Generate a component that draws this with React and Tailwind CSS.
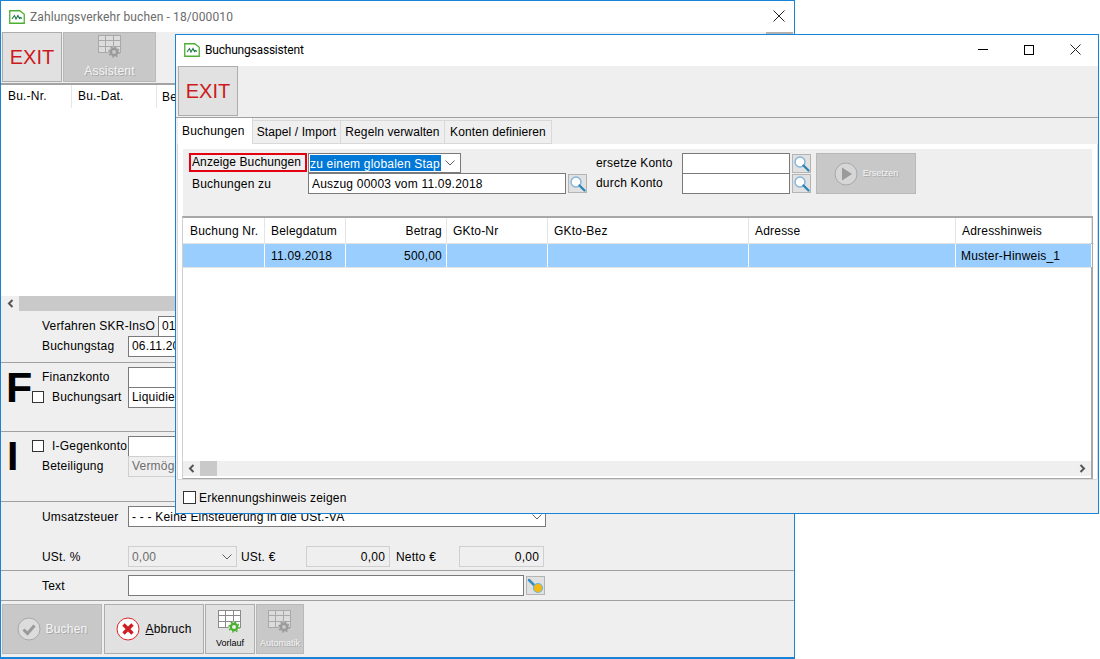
import React from 'react'

const font = "font-['Liberation_Sans',Arial,sans-serif] tracking-[0.2px]"
const disabledText = 'text-[#f4f4f4] [text-shadow:1px_1px_0_#a8a8a8]'

function AppIcon() {
  return (
    <svg width="16" height="16" viewBox="0 0 16 16" className="shrink-0">
      <path d="M.75 1.75h10l4.5 3.5v9h-14.5z" fill="#fff" stroke="#4caf32" strokeWidth="1.3" />
      <path d="M3 10l2.5-3.5L7 10l2-3.5 1.5 3 1-1 1.5 1" fill="none" stroke="#1f7a4a" strokeWidth="1.1" />
    </svg>
  )
}

function GridGear({ muted }) {
  const line = muted ? '#a9a9a9' : '#8a8a8a'
  const fill = muted ? '#dcdcdc' : '#fff'
  const gear = muted ? '#9a9a9a' : '#4caf32'
  return (
    <svg width="26" height="24" viewBox="0 0 26 24">
      <rect x="1.5" y="1.5" width="22" height="17" fill={fill} stroke={line} />
      <path d="M1.5 6.5h22M1.5 12.5h22M8.5 1.5v17M16.5 1.5v17" stroke={line} fill="none" />
      <circle cx="17" cy="18" r="5.5" fill={muted ? '#c8c8c8' : '#efefef'} />
      <circle cx="17" cy="18" r="3.2" fill="none" stroke={gear} strokeWidth="2.4" />
      <circle cx="17" cy="18" r="5" fill="none" stroke={gear} strokeWidth="1.4" strokeDasharray="1.8 2.1" />
    </svg>
  )
}

function Magnifier() {
  return (
    <svg width="17" height="17" viewBox="0 0 17 17">
      <circle cx="7" cy="7" r="5" fill="#fff" stroke="#7fb5d8" strokeWidth="1.4" />
      <path d="M10.5 10.5l5 5" stroke="#2f86b8" strokeWidth="2.4" strokeLinecap="round" />
    </svg>
  )
}

function SearchButton() {
  return (
    <button className="w-[19px] h-[19px] shrink-0 flex items-center justify-center bg-[#e1e1e1] border border-[#b4b4b4]">
      <Magnifier />
    </button>
  )
}

function ExitButton() {
  return (
    <button className="w-[60px] h-[50px] shrink-0 flex items-center justify-center bg-[#e1e1e1] border border-[#adadad] text-[#cc1a1e] text-[20px] tracking-normal">
      EXIT
    </button>
  )
}

function Field({ w, children, disabled, right, className = '' }) {
  return (
    <div
      className={`h-[21px] shrink-0 flex items-center px-[3px] whitespace-nowrap overflow-hidden text-[12px] border ${
        disabled ? 'bg-[#efefef] border-[#cfcfcf] text-[#6d6d6d]' : 'bg-white border-[#7a7a7a] text-black'
      } ${right ? 'justify-end' : ''} ${className}`}
      style={{ width: w }}
    >
      {children}
    </div>
  )
}

function Chevron() {
  return (
    <svg width="10" height="6" viewBox="0 0 10 6" className="shrink-0">
      <path d="M.5.5L5 5 9.5.5" fill="none" stroke="#606060" />
    </svg>
  )
}

function Checkbox({ large }) {
  return <span className={`shrink-0 bg-white border border-[#333] ${large ? 'w-[13px] h-[13px]' : 'w-[12px] h-[12px]'}`} />
}

function Label({ w, children }) {
  return (
    <span className="shrink-0 text-[12px] text-black whitespace-nowrap" style={{ width: w }}>
      {children}
    </span>
  )
}

function BackWindow() {
  return (
    <div className="absolute left-0 top-0 w-[795px] h-[659px] flex flex-col bg-[#efefef] border border-[#1883d7] border-b-2">
      <div className="h-[31px] shrink-0 bg-white flex items-center pl-[8px] gap-[5px]">
        <AppIcon />
        <span className="text-[12px] text-[#6b6b6b] tracking-[0.12px] font-['Roboto',sans-serif] flex-1">Zahlungsverkehr buchen - 18/000010</span>
        <svg width="12" height="12" viewBox="0 0 12 12" className="mr-[9px] mb-[2px]">
          <path d="M.5.5l11 11M11.5.5l-11 11" stroke="#222" />
        </svg>
      </div>

      <div className="relative h-[51px] shrink-0 flex pl-[1px] gap-[1px] border-b-[2px] border-[#a3a3a3] box-content">
        <ExitButton />
        <div className="w-[93px] h-[50px] flex flex-col items-center bg-[#c8c8c8] border border-[#b9b9b9] pt-[1px]">
          <GridGear muted />
          <span className={`text-[12px] leading-[14px] mt-[6px] ${disabledText}`}>Assistent</span>
        </div>
        <span className="absolute right-[1px] top-0 w-[27px] h-[2px] bg-[#b0b0b0]" />
      </div>

      <div className="h-[226px] shrink-0 bg-white flex flex-col">
        <div className="h-[23px] flex text-[12px] text-black items-center">
          <span className="w-[71px] pl-[7px] h-full border-r border-[#e6e6e6] leading-[23px]">Bu.-Nr.</span>
          <span className="w-[85px] pl-[6px] h-full border-r border-[#e6e6e6] leading-[23px]">Bu.-Dat.</span>
          <span className="pl-[5px]">Be</span>
        </div>
        <div className="flex-1" />
        <div className="h-[15px] bg-[#c9c9c9] flex">
          <div className="w-[18px] bg-[#efefef] flex items-center justify-center">
            <svg width="7" height="9" viewBox="0 0 7 9"><path d="M5.5 1L2 4.5 5.5 8" fill="none" stroke="#555" strokeWidth="2" /></svg>
          </div>
        </div>
      </div>

      <section className="h-[52px] shrink-0 border-b border-[#a0a0a0] flex flex-col pt-[5px]">
        <div className="h-[20px] flex items-center">
          <span className="w-[41px]" />
          <Label w={116}>Verfahren SKR-InsO</Label>
          <Field w={60}>01</Field>
        </div>
        <div className="h-[20px] flex items-center">
          <span className="w-[41px]" />
          <Label w={86}>Buchungstag</Label>
          <Field w={120}>06.11.2018</Field>
        </div>
      </section>

      <section className="h-[69px] shrink-0 border-b border-[#a0a0a0] flex pt-[4px]">
        <span className="w-[31px] shrink-0 pl-[5px] text-[43px] leading-[40px] font-bold text-black tracking-normal">F</span>
        <div className="flex flex-col">
          <div className="h-[20px] flex items-center">
            <span className="w-[10px]" />
            <Label w={86}>Finanzkonto</Label>
            <Field w={120} />
          </div>
          <div className="h-[20px] flex items-center">
            <Checkbox />
            <span className="w-[8px]" />
            <Label w={76}>Buchungsart</Label>
            <Field w={120}>Liquidierung</Field>
          </div>
        </div>
      </section>

      <section className="h-[70px] shrink-0 border-b border-[#a0a0a0] flex pt-[4px]">
        <span className="w-[31px] shrink-0 pl-[6px] text-[41px] leading-[40px] font-bold text-black tracking-normal">I</span>
        <div className="flex flex-col">
          <div className="h-[20px] flex items-center">
            <Checkbox />
            <span className="w-[8px]" />
            <Label w={76}>I-Gegenkonto</Label>
            <Field w={120} />
          </div>
          <div className="h-[20px] flex items-center">
            <span className="w-[10px]" />
            <Label w={86}>Beteiligung</Label>
            <Field w={120} disabled>Vermögen</Field>
          </div>
        </div>
      </section>

      <section className="h-[69px] shrink-0 border-b border-[#a0a0a0] flex flex-col pt-[4px] pl-[41px]">
        <div className="h-[21px] flex items-center">
          <Label w={86}>Umsatzsteuer</Label>
          <Field w={418} className="justify-between !pr-[3px]">
            <span>- - - Keine Einsteuerung in die USt.-VA</span>
            <Chevron />
          </Field>
        </div>
        <div className="h-[21px] flex items-center mt-[19px]">
          <Label w={86}>USt. %</Label>
          <Field w={109} disabled className="justify-between !pr-0 bg-[#e9e9e9]">
            <span>0,00</span>
            <span className="w-[18px] h-full bg-[#efefef] flex items-center justify-center"><Chevron /></span>
          </Field>
          <span className="w-[4px]" />
          <Label w={65}>USt. €</Label>
          <Field w={84} disabled right className="!text-black px-[4px]">0,00</Field>
          <span className="w-[6px]" />
          <Label w={63}>Netto €</Label>
          <Field w={85} disabled right className="!text-black px-[4px]">0,00</Field>
        </div>
      </section>

      <section className="h-[30px] shrink-0 border-b border-[#a0a0a0] flex items-center pl-[41px]">
        <Label w={86}>Text</Label>
        <Field w={396} />
        <span className="w-[2px]" />
        <button className="w-[19px] h-[19px] bg-[#e1e1e1] border border-[#b4b4b4] flex items-center justify-center">
          <svg width="17" height="17" viewBox="0 0 17 17">
            <path d="M2 3l6 6" stroke="#3b8dbf" strokeWidth="2.5" strokeLinecap="round" />
            <circle cx="11" cy="11" r="4.5" fill="#f6b80f" stroke="#6bb6e0" strokeWidth="1.2" />
          </svg>
        </button>
      </section>

      <div className="flex pl-[1px] pt-[3px] gap-[2px]">
        <div className="w-[100px] h-[50px] flex items-center justify-center gap-[5px] bg-[#c8c8c8] border border-[#b9b9b9]">
          <svg width="24" height="24" viewBox="0 0 24 24">
            <circle cx="12" cy="12" r="11" fill="#dcdcdc" stroke="#a8a8a8" />
            <path d="M6.5 12.5l4 4 7-8" fill="none" stroke="#9a9a9a" strokeWidth="3" />
          </svg>
          <span className={`text-[12px] ${disabledText}`}>Buchen</span>
        </div>
        <button className="w-[100px] h-[50px] flex items-center justify-center gap-[5px] bg-[#e1e1e1] border border-[#adadad]">
          <svg width="24" height="24" viewBox="0 0 24 24">
            <circle cx="12" cy="12" r="11" fill="#fff" stroke="#d8272b" />
            <path d="M7.5 7.5l9 9M16.5 7.5l-9 9" fill="none" stroke="#cf1f24" strokeWidth="3.4" />
          </svg>
          <span className="text-[12px] text-black"><span className="underline">A</span>bbruch</span>
        </button>
        <button className="w-[50px] h-[50px] -ml-[1px] flex flex-col items-center bg-[#e1e1e1] border border-[#adadad] pt-[4px]">
          <GridGear />
          <span className="text-[9px] leading-[12px] mt-[4px] text-black tracking-normal">Vorlauf</span>
        </button>
        <div className="w-[48px] h-[50px] -ml-[1px] flex flex-col items-center bg-[#c8c8c8] border border-[#b9b9b9] pt-[4px]">
          <GridGear muted />
          <span className={`text-[9px] leading-[12px] mt-[4px] tracking-normal ${disabledText}`}>Automatik</span>
        </div>
      </div>
    </div>
  )
}

const columns = [
  { w: 82, title: 'Buchung Nr.', headerClass: 'pl-[7px]' },
  { w: 81, title: 'Belegdatum', value: '11.09.2018' },
  { w: 101, title: 'Betrag', value: '500,00', right: true },
  { w: 101, title: 'GKto-Nr' },
  { w: 201, title: 'GKto-Bez' },
  { w: 207, title: 'Adresse' },
  { w: 136, title: 'Adresshinweis', value: 'Muster-Hinweis_1', valueClass: 'pl-[5px]' },
]

const tabs = [
  { label: 'Buchungen', w: 75, active: true },
  { label: 'Stapel / Import', w: 88 },
  { label: 'Regeln verwalten', w: 104 },
  { label: 'Konten definieren', w: 107 },
]

function FrontWindow() {
  return (
    <div className="absolute left-[175px] top-[34px] w-[924px] h-[480px] flex flex-col bg-[#efefef] border border-[#1883d7]">
      <div className="h-[31px] shrink-0 bg-white flex items-center pl-[8px] gap-[5px] pb-[2px]">
        <AppIcon />
        <span className="text-[12px] text-black tracking-[-0.2px] font-['Roboto',sans-serif] flex-1">Buchungsassistent</span>
        <div className="flex items-center">
          <span className="w-[46px] flex justify-center"><span className="w-[10px] h-px bg-black" /></span>
          <span className="w-[46px] flex justify-center"><span className="w-[10px] h-[10px] border border-black" /></span>
          <span className="w-[46px] flex justify-center">
            <svg width="11" height="11" viewBox="0 0 11 11"><path d="M.5.5l10 10M10.5.5l-10 10" stroke="#222" /></svg>
          </span>
        </div>
      </div>

      <div className="h-[51px] shrink-0 pl-[2px] border-b border-[#a0a0a0] box-content">
        <ExitButton />
      </div>

      <div className="h-[26px] shrink-0 flex pl-[2px] items-end">
        {tabs.map((tab) => (
          <div
            key={tab.label}
            className={`flex items-center text-[12px] text-black border-r border-[#d9d9d9] ${
              tab.active ? 'h-[26px] bg-white pl-[4px]' : 'h-[24px] bg-[#efefef] border-t border-b border-[#d9d9d9] justify-center tracking-[0.1px]'
            }`}
            style={{ width: tab.w }}
          >
            {tab.label}
          </div>
        ))}
      </div>

      <div className="h-[335px] shrink-0 mx-[1px] w-[921px] bg-white border-l border-r border-[#d9d9d9] pl-[5px] pt-[5px] pr-[1px] flex flex-col">
        <div className="h-[67px] shrink-0 w-[909px] bg-[#efefef] flex pl-[6px] pt-[4px]">
          <div className="flex flex-col w-[119px] shrink-0">
            <span className="w-[118px] h-[19px] border-2 border-[#e5000f] pl-[1px] text-[12px] leading-[14px] tracking-[0.1px] text-black whitespace-nowrap">Anzeige Buchungen</span>
            <span className="pl-[3px] pt-[2px] text-[12px] leading-[20px] text-black">Buchungen zu</span>
          </div>
          <div className="flex flex-col w-[288px] shrink-0">
            <div className="w-[153px] h-[20px] flex items-center bg-white border border-[#7a7a7a] pl-[1px] pr-[5px]">
              <span className="w-[131px] h-[16px] leading-[18px] overflow-hidden whitespace-nowrap bg-[#0078d7] text-white text-[12px]">zu einem globalen Stap</span>
              <span className="flex-1 flex justify-end"><Chevron /></span>
            </div>
            <div className="flex items-center gap-[2px]">
              <Field w={258}>Auszug 00003 vom 11.09.2018</Field>
              <SearchButton />
            </div>
          </div>
          <div className="flex flex-col w-[86px] shrink-0 text-[12px] text-black">
            <span className="h-[20px] leading-[20px]">ersetze Konto</span>
            <span className="h-[20px] leading-[20px]">durch Konto</span>
          </div>
          <div className="flex flex-col">
            <div className="flex items-center gap-[2px] h-[20px]">
              <Field w={108} />
              <SearchButton />
            </div>
            <div className="flex items-center gap-[2px] h-[21px]">
              <Field w={108} />
              <SearchButton />
            </div>
          </div>
          <div className="ml-[5px] w-[100px] h-[41px] flex items-center justify-center gap-[5px] bg-[#c8c8c8] border border-[#b9b9b9]">
            <svg width="24" height="24" viewBox="0 0 24 24">
              <circle cx="12" cy="12" r="11" fill="#d6d6d6" stroke="#a8a8a8" />
              <path d="M8 5.5l10 6.5-10 6.5z" fill="#9a9a9a" />
            </svg>
            <span className={`text-[9px] tracking-normal ${disabledText}`}>Ersetzen</span>
          </div>
        </div>

        <div className="w-[911px] h-[264px] shrink-0 -ml-[1px] bg-white border-t-2 border-b-2 border-r-2 border-l border-[#a8a8a8] border-l-[#d0d0d0] flex flex-col">
          <div className="h-[26px] shrink-0 flex border-b border-[#e4e4e4]">
            {columns.map((c) => (
              <span
                key={c.title}
                className={`shrink-0 h-full leading-[27px] px-[6px] text-[12px] text-black border-r border-[#e4e4e4] whitespace-nowrap overflow-hidden ${c.right ? 'text-right pr-[4px]' : ''} ${c.headerClass || ''}`}
                style={{ width: c.w }}
              >
                {c.title}
              </span>
            ))}
          </div>
          <div className="h-[24px] shrink-0 flex border-b border-[#e4e4e4]">
            {columns.map((c) => (
              <span
                key={c.title}
                className={`shrink-0 h-full leading-[24px] px-[6px] text-[12px] text-black bg-[#99ceff] border-r border-white whitespace-nowrap overflow-hidden ${c.right ? 'text-right pr-[4px]' : ''} ${c.valueClass || ''}`}
                style={{ width: c.w }}
              >
                {c.value}
              </span>
            ))}
          </div>
          <div className="flex-1" />
          <div className="h-[15px] shrink-0 bg-[#efefef] flex items-center mb-[2px]">
            <span className="w-[17px] flex justify-center">
              <svg width="7" height="9" viewBox="0 0 7 9"><path d="M5.5 1L2 4.5 5.5 8" fill="none" stroke="#555" strokeWidth="2" /></svg>
            </span>
            <span className="w-[17px] h-full bg-[#c9c9c9]" />
            <span className="flex-1" />
            <span className="w-[17px] flex justify-center">
              <svg width="7" height="9" viewBox="0 0 7 9"><path d="M1.5 1L5 4.5 1.5 8" fill="none" stroke="#555" strokeWidth="2" /></svg>
            </span>
          </div>
        </div>
      </div>

      <div className="flex-1 mx-[1px] border-t border-[#d9d9d9] flex items-center pl-[6px] gap-[3px] pt-[2px]">
        <Checkbox large />
        <span className="text-[12px] text-black">Erkennungshinweis zeigen</span>
      </div>
    </div>
  )
}

export default function App() {
  return (
    <div className={`relative w-[1100px] h-[659px] overflow-hidden bg-white ${font}`}>
      <BackWindow />
      <FrontWindow />
    </div>
  )
}
